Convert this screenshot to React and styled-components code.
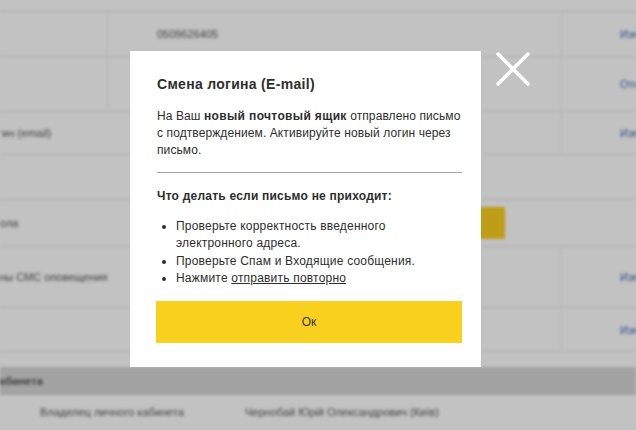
import React from 'react';
import styled, { createGlobalStyle } from 'styled-components';

const Global = createGlobalStyle`
  html, body {
    margin: 0;
    padding: 0;
    background: #fff;
    font-family: "Liberation Sans", Arial, sans-serif;
    overflow: hidden;
  }
`;

const Page = styled.div`
  width: 636px;
  height: 430px;
  overflow: hidden;
  filter: blur(1.4px);
  color: #555;
  font-size: 11px;
`;

const Table = styled.div`
  margin-left: -90px;
  width: 800px;
`;

const Row = styled.div`
  display: grid;
  grid-template-columns: 198px 454px 148px;
  height: ${p => p.h}px;
  border-bottom: 1px solid ${p => (p.line ? '#e4e4e4' : 'transparent')};
  box-sizing: border-box;
`;

const Cell = styled.div`
  display: flex;
  align-items: center;
  padding-left: ${p => p.pad || 0}px;
  border-right: 1px solid ${p => (p.sep ? '#ededed' : 'transparent')};
  white-space: nowrap;
`;

const Link = styled.span`
  color: #3d62b5;
`;

const BgButton = styled.div`
  width: 80px;
  height: 32px;
  background: #fad01f;
  margin-left: 317px;
`;

const Band = styled.div`
  margin-top: 15px;
  height: 28px;
  background: #d6d6d6;
  display: flex;
  align-items: center;
  font-weight: bold;
  white-space: nowrap;
`;

const BandText = styled.span`
  margin-left: -100px;
`;

const Owner = styled.div`
  display: grid;
  grid-template-columns: 205px 1fr;
  padding-left: 40px;
  height: 33px;
  align-items: center;
`;

const Overlay = styled.div`
  position: fixed;
  inset: 0;
  background: rgba(0, 0, 0, 0.24);
  padding: 51px 0 0 130px;
  box-sizing: border-box;
`;

const Dialog = styled.div`
  position: relative;
  width: 351px;
  height: 316px;
  background: #fff;
  box-sizing: border-box;
  padding: 23px 19px 0 26px;
  color: #2e2e2e;
  font-size: 12px;
  line-height: 17px;
`;

const Close = styled.svg`
  position: absolute;
  left: calc(100% + 15px);
  top: 1px;
  width: 34px;
  height: 34px;
`;

const Title = styled.h2`
  margin: 0 0 14px 1px;
  font-size: 14px;
  line-height: 20px;
  font-weight: bold;
  letter-spacing: 0.3px;
`;

const Text = styled.p`
  margin: 0 0 0 1px;
  letter-spacing: 0.1px;
  b {
    letter-spacing: 0.35px;
  }
`;

const Divider = styled.hr`
  border: 0;
  border-top: 1px solid #a8a8a8;
  margin: 13px 0 15px 1px;
`;

const Subtitle = styled.div`
  font-weight: bold;
  letter-spacing: 0.22px;
  margin: 0 0 13px 1px;
`;

const List = styled.ul`
  margin: 0 0 14px 0;
  padding-left: 20px;
  line-height: 17.3px;
  letter-spacing: 0.2px;
`;

const Under = styled.a`
  color: #2e2e2e;
  text-decoration: underline;
`;

const Ok = styled.button`
  display: block;
  width: 306px;
  height: 42px;
  border: 0;
  background: #fad01e;
  color: #333;
  font-family: inherit;
  font-size: 12px;
`;

function App() {
  return (
    <>
      <Global />
      <Page>
        <Table>
          <Row h={12} line />
          <Row h={45} line>
            <Cell sep />
            <Cell sep pad={49}>0509626405</Cell>
            <Cell pad={58}><Link>Изменить</Link></Cell>
          </Row>
          <Row h={55} line>
            <Cell sep />
            <Cell sep />
            <Cell pad={58}><Link>Отключить</Link></Cell>
          </Row>
          <Row h={43} line>
            <Cell pad={75}>Логин (email)</Cell>
            <Cell sep />
            <Cell pad={58}><Link>Изменить</Link></Cell>
          </Row>
          <Row h={45} line />
          <Row h={47} line>
            <Cell pad={75}>Школа</Cell>
            <Cell><BgButton /></Cell>
            <Cell />
          </Row>
          <Row h={61} line>
            <Cell pad={75}>Цены СМС оповещения</Cell>
            <Cell sep />
            <Cell pad={58}><Link>Изменить</Link></Cell>
          </Row>
          <Row h={44} line>
            <Cell />
            <Cell sep />
            <Cell pad={58}><Link>Изменить</Link></Cell>
          </Row>
        </Table>
        <Band><BandText>Данные личного кабинета</BandText></Band>
        <Owner>
          <span>Владелец личного кабинета</span>
          <span>Чернобай Юрій Олександрович (Київ)</span>
        </Owner>
      </Page>
      <Overlay>
        <Dialog>
          <Close viewBox="0 0 34 34">
            <path d="M2 2 L32 32 M32 2 L2 32" stroke="#fff" strokeWidth="3.5" strokeLinecap="round" />
          </Close>
          <Title>Смена логина (E-mail)</Title>
          <Text>
            На Ваш <b>новый почтовый ящик</b> отправлено письмо с{'\u00a0'}подтверждением. Активируйте новый логин через письмо.
          </Text>
          <Divider />
          <Subtitle>Что делать если письмо не приходит:</Subtitle>
          <List>
            <li>Проверьте корректность введенного электронного адреса.</li>
            <li>Проверьте Спам и Входящие сообщения.</li>
            <li>Нажмите <Under>отправить повторно</Under></li>
          </List>
          <Ok>Ок</Ok>
        </Dialog>
      </Overlay>
    </>
  );
}

export default App;
